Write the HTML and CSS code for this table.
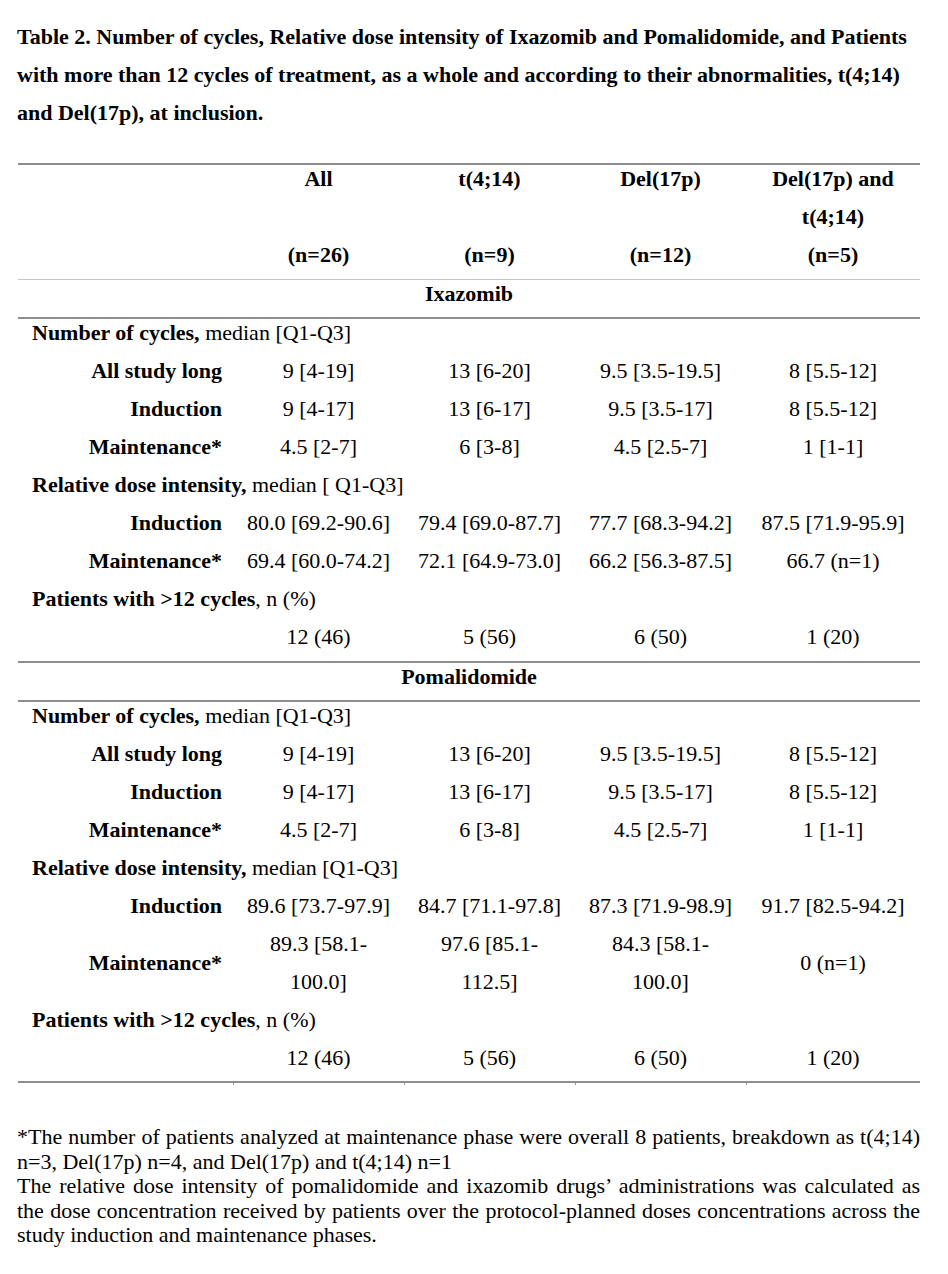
FILE: index.html
```html
<!DOCTYPE html>
<html>
<head>
<meta charset="utf-8">
<link rel="stylesheet" href="styles.css">
</head>
<body>
<div class="page">
  <h1 class="title">Table 2. Number of cycles, Relative dose intensity of Ixazomib and Pomalidomide, and Patients<br>with more than 12 cycles of treatment, as a whole and according to their abnormalities, t(4;14)<br>and Del(17p), at inclusion.</h1>

  <table class="data">
    <colgroup>
      <col class="c-label"><col class="c-val"><col class="c-val"><col class="c-val"><col class="c-last">
    </colgroup>
    <thead>
      <tr class="first"><th></th><th>All</th><th>t(4;14)</th><th>Del(17p)</th><th>Del(17p) and</th></tr>
      <tr><th></th><th></th><th></th><th></th><th>t(4;14)</th></tr>
      <tr class="head-end"><th></th><th>(n=26)</th><th>(n=9)</th><th>(n=12)</th><th>(n=5)</th></tr>
    </thead>
    <tbody>
      <tr class="section"><td colspan="5">Ixazomib</td></tr>
      <tr class="group"><td colspan="5"><b>Number of cycles,</b> median [Q1-Q3]</td></tr>
      <tr><td class="sub">All study long</td><td>9 [4-19]</td><td>13 [6-20]</td><td>9.5 [3.5-19.5]</td><td>8 [5.5-12]</td></tr>
      <tr><td class="sub">Induction</td><td>9 [4-17]</td><td>13 [6-17]</td><td>9.5 [3.5-17]</td><td>8 [5.5-12]</td></tr>
      <tr><td class="sub">Maintenance*</td><td>4.5 [2-7]</td><td>6 [3-8]</td><td>4.5 [2.5-7]</td><td>1 [1-1]</td></tr>
      <tr class="group"><td colspan="5"><b>Relative dose intensity,</b> median [ Q1-Q3]</td></tr>
      <tr><td class="sub">Induction</td><td>80.0 [69.2-90.6]</td><td>79.4 [69.0-87.7]</td><td>77.7 [68.3-94.2]</td><td>87.5 [71.9-95.9]</td></tr>
      <tr><td class="sub">Maintenance*</td><td>69.4 [60.0-74.2]</td><td>72.1 [64.9-73.0]</td><td>66.2 [56.3-87.5]</td><td>66.7 (n=1)</td></tr>
      <tr class="group"><td colspan="5"><b>Patients with &gt;12 cycles</b>, n (%)</td></tr>
      <tr><td class="sub"></td><td>12 (46)</td><td>5 (56)</td><td>6 (50)</td><td>1 (20)</td></tr>
    </tbody>
    <tbody>
      <tr class="section sep"><td colspan="5">Pomalidomide</td></tr>
      <tr class="group"><td colspan="5"><b>Number of cycles,</b> median [Q1-Q3]</td></tr>
      <tr><td class="sub">All study long</td><td>9 [4-19]</td><td>13 [6-20]</td><td>9.5 [3.5-19.5]</td><td>8 [5.5-12]</td></tr>
      <tr><td class="sub">Induction</td><td>9 [4-17]</td><td>13 [6-17]</td><td>9.5 [3.5-17]</td><td>8 [5.5-12]</td></tr>
      <tr><td class="sub">Maintenance*</td><td>4.5 [2-7]</td><td>6 [3-8]</td><td>4.5 [2.5-7]</td><td>1 [1-1]</td></tr>
      <tr class="group"><td colspan="5"><b>Relative dose intensity,</b> median [Q1-Q3]</td></tr>
      <tr><td class="sub">Induction</td><td>89.6 [73.7-97.9]</td><td>84.7 [71.1-97.8]</td><td>87.3 [71.9-98.9]</td><td>91.7 [82.5-94.2]</td></tr>
      <tr><td class="sub">Maintenance*</td><td><div class="wrap">89.3 [58.1-<br>100.0]</div></td><td><div class="wrap">97.6 [85.1-<br>112.5]</div></td><td><div class="wrap">84.3 [58.1-<br>100.0]</div></td><td>0 (n=1)</td></tr>
      <tr class="group"><td colspan="5"><b>Patients with &gt;12 cycles</b>, n (%)</td></tr>
      <tr class="last"><td class="sub"></td><td>12 (46)</td><td>5 (56)</td><td>6 (50)</td><td>1 (20)</td></tr>
      <tr class="ticks"><td></td><td></td><td></td><td></td><td></td></tr>
    </tbody>
  </table>

  <div class="notes">
    <p><span class="line j">*The number of patients analyzed at maintenance phase were overall 8 patients, breakdown as t(4;14)</span><span class="line">n=3, Del(17p) n=4, and Del(17p) and t(4;14) n=1</span></p>
    <p><span class="line j">The relative dose intensity of pomalidomide and ixazomib drugs’ administrations was calculated as</span><span class="line j">the dose concentration received by patients over the protocol-planned doses concentrations across the</span><span class="line">study induction and maintenance phases.</span></p>
  </div>
</div>
</body>
</html>
```

FILE: styles.css
```css
html, body {
  margin: 0;
  padding: 0;
  background: #fff;
}

body {
  font-family: "Liberation Serif", "Times New Roman", serif;
  color: #000;
}

.page {
  padding: 18px 28px 0 17px;
}

.title {
  margin: 0;
  font-size: 22px;
  font-weight: bold;
  line-height: 38px;
  white-space: nowrap;
}

.data {
  margin: 31px 0 0 1px;
  width: 902px;
  border-collapse: collapse;
  table-layout: fixed;
  font-size: 22px;
  border-top: 2px solid #8e8e8e;
}

.c-label { width: 215px; }
.c-val { width: 171px; }
.c-last { width: 174px; }

.data th,
.data td {
  padding: 0 0 10px;
  line-height: 28px;
  text-align: center;
  vertical-align: middle;
  white-space: nowrap;
  font-weight: normal;
}

.data th {
  font-weight: bold;
}

.data .head-end th {
  border-bottom: 1px solid #c4c4c4;
}

.data .section td {
  font-weight: bold;
  padding-bottom: 9px;
  border-bottom: 2px solid #8e8e8e;
}

.data .section.sep td {
  border-top: 2px solid #8e8e8e;
}

.data .group td {
  text-align: left;
  padding-left: 14px;
}

.data td.sub {
  text-align: right;
  padding-right: 11px;
  font-weight: bold;
}

.data .wrap {
  line-height: 38px;
  margin: -5px 0;
}

.data .last td {
  padding-bottom: 9px;
  border-bottom: 2px solid #8e8e8e;
}

.data .ticks td {
  padding: 0;
  height: 2px;
  line-height: 0;
  font-size: 0;
}

.data .ticks td + td {
  border-left: 1px solid #9a9a9a;
}

.notes {
  margin-top: 40px;
  font-size: 22px;
  line-height: 24.5px;
  width: 903px;
}

.notes p {
  margin: 0;
}

.notes .line {
  display: block;
  white-space: nowrap;
}

.notes .line.j {
  text-align: justify;
  text-align-last: justify;
  white-space: normal;
}
```
